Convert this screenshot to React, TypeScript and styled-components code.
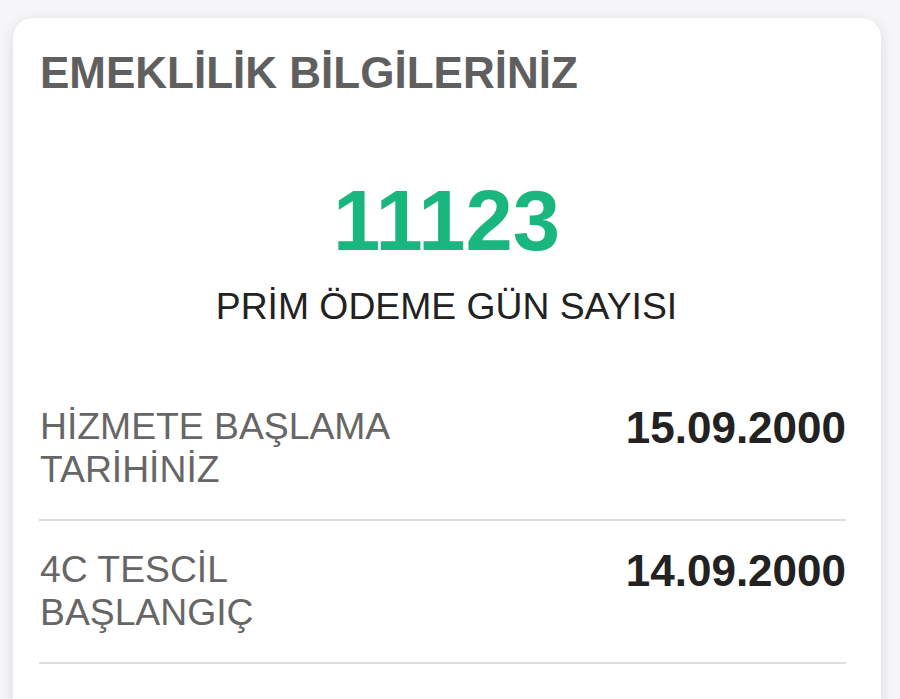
import React from 'react';
import styled, { createGlobalStyle } from 'styled-components';

const GlobalStyle = createGlobalStyle`
  html, body {
    margin: 0;
    padding: 0;
    background: #f6f6f8;
    font-family: 'Liberation Sans', Arial, sans-serif;
  }
`;

const Page = styled.div`
  padding: 18px 19px 0 13px;
  height: 699px;
  box-sizing: border-box;
  overflow: hidden;
`;

const Card = styled.section`
  background: #fff;
  border-radius: 20px;
  box-shadow: 0 4px 14px rgba(40, 40, 70, 0.14);
  padding: 30px 35px 80px 26px;
`;

const Title = styled.h1`
  margin: 0;
  font-size: 44px;
  line-height: 50px;
  font-weight: 700;
  color: #5f5f5f;
  padding-left: 1px;
`;

const Summary = styled.div`
  display: flex;
  flex-direction: column;
  align-items: center;
  margin-top: 81px;
`;

const BigNumber = styled.div`
  font-size: 85px;
  line-height: 84px;
  font-weight: 700;
  color: #19b67d;
  letter-spacing: 0;
  padding-left: 8px;
`;

const Caption = styled.div`
  margin-top: 22px;
  font-size: 37.3px;
  line-height: 43px;
  color: #222;
  padding-left: 8px;
`;

const List = styled.div`
  margin-top: 50px;
  display: flex;
  flex-direction: column;
`;

const Row = styled.div`
  display: flex;
  justify-content: space-between;
  align-items: flex-start;
  padding: 27px 0 28px;
  border-bottom: 2px solid #dedede;
`;

const Label = styled.div`
  font-size: 37.3px;
  line-height: 43px;
  color: #666;
  padding-left: 1px;
  max-width: 400px;
`;

const Value = styled.div`
  font-size: 44px;
  line-height: 50px;
  font-weight: 700;
  color: #222;
  margin-top: -2px;
`;

const rows = [
  { label: ['HİZMETE BAŞLAMA', 'TARİHİNİZ'], value: '15.09.2000' },
  { label: ['4C TESCİL', 'BAŞLANGIÇ'], value: '14.09.2000' },
];

export default function App() {
  return (
    <>
      <GlobalStyle />
      <Page>
        <Card>
          <Title>EMEKLİLİK BİLGİLERİNİZ</Title>
          <Summary>
            <BigNumber>11123</BigNumber>
            <Caption>PRİM ÖDEME GÜN SAYISI</Caption>
          </Summary>
          <List>
            {rows.map((r) => (
              <Row key={r.value}>
                <Label>
                  {r.label[0]}
                  <br />
                  {r.label[1]}
                </Label>
                <Value>{r.value}</Value>
              </Row>
            ))}
          </List>
        </Card>
      </Page>
    </>
  );
}
